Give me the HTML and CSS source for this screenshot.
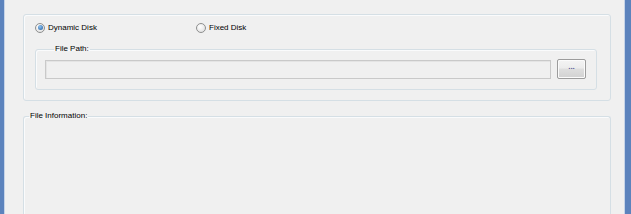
FILE: index.html
```html
<!DOCTYPE html>
<html lang="en">
<head>
    <meta charset="UTF-8">
    <title>Disk Options</title>
    <link rel="stylesheet" href="styles.css">
</head>
<body>
    <div class="window">
        <div class="group disk-group">
            <div class="radio-row">
                <label class="radio-item dynamic">
                    <span class="radio checked"></span>
                    <span>Dynamic Disk</span>
                </label>
                <label class="radio-item">
                    <span class="radio"></span>
                    <span>Fixed Disk</span>
                </label>
            </div>

            <fieldset class="group path-group">
                <legend>File Path:</legend>
                <div class="path-row">
                    <div class="path-input"></div>
                    <button class="browse-btn">...</button>
                </div>
            </fieldset>
        </div>

        <fieldset class="group info-group">
            <legend>File Information:</legend>
        </fieldset>
    </div>
</body>
</html>
```

FILE: styles.css
```css
body {
    margin: 0;
    background: #f0f0f0;
    font-family: 'Liberation Sans', Arial, sans-serif;
    font-size: 8px;
    color: #000;
    overflow: hidden;
}

.window {
    height: 214px;
    box-sizing: border-box;
    display: flex;
    flex-direction: column;
    padding: 14px 14px 0 19px;
    border-left: 4px solid #5c83bd;
    border-right: 6px solid #5c83bd;
    box-shadow: inset 1px 0 0 #c6d4e8, inset -1px 0 0 #c6d4e8;
}

.group {
    border: 1px solid #d5dfe5;
    border-radius: 3px;
    box-shadow: inset 1px 1px 0 #fafbfc;
}

.disk-group {
    height: 87px;
    flex-shrink: 0;
    box-sizing: border-box;
    padding: 7px 13px 0 11px;
}

.radio-row {
    display: flex;
    height: 11px;
    align-items: center;
}

.radio-item {
    display: flex;
    align-items: center;
    gap: 3px;
}

.radio-item.dynamic {
    width: 161px;
}

.radio {
    width: 8px;
    height: 8px;
    border-radius: 50%;
    border: 1px solid #8e8f8f;
    background: radial-gradient(circle at 40% 35%, #ffffff, #dadada);
    display: flex;
    align-items: center;
    justify-content: center;
}

.radio.checked::after {
    content: '';
    width: 5px;
    height: 5px;
    border-radius: 50%;
    background: radial-gradient(circle at 40% 35%, #8ec3f2, #1f5a9c);
}

fieldset.group {
    margin: 0;
    min-width: 0;
}

legend {
    padding: 0 1px;
    margin-left: 5px;
    line-height: 10px;
}

.path-group {
    margin-top: 11px !important;
    padding: 5px 10px 10px 9px;
}

.path-group legend {
    margin-left: 9px;
}

.path-row {
    display: flex;
    align-items: center;
    gap: 6px;
}

.path-input {
    flex: 1;
    height: 19px;
    box-sizing: border-box;
    border: 1px solid #c9c9c9;
    box-shadow: inset 1px 1px 0 #e4e4e4;
    background: #f0f0f0;
    margin-top: 1px;
}

.browse-btn {
    width: 29px;
    height: 20px;
    padding: 0 0 4px;
    border: 1px solid #9c9c9c;
    border-radius: 2px;
    background: linear-gradient(#f4f4f4 0%, #ececec 45%, #dedede 50%, #d2d2d2 100%);
    box-shadow: inset 0 0 0 1px #fbfbfb;
    font-family: 'Liberation Sans', Arial, sans-serif;
    font-size: 8px;
    font-weight: bold;
    color: #5d5a9a;
    line-height: 8px;
}

.info-group {
    margin-top: 10px !important;
    flex: 1;
    padding: 0;
    border-bottom: none;
    border-radius: 3px 3px 0 0;
}
```
